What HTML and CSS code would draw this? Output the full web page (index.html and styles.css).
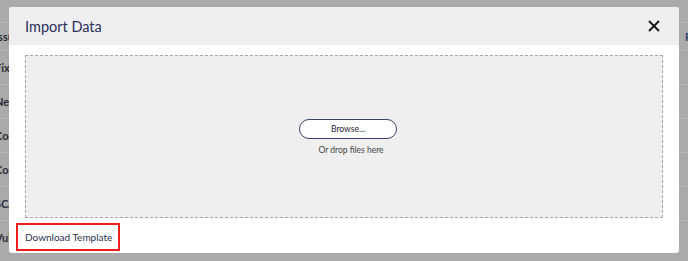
FILE: index.html
```html
<!DOCTYPE html>
<html lang="en">
<head>
	<meta charset="UTF-8">
	<meta name="viewport" content="width=device-width, initial-scale=1.0">
	<title>Import Data</title>
	<link rel="stylesheet" href="styles.css">
</head>
<body>
	<div id="page">
		<div class="page-row page-first"><span class="cell-l">Issue</span><span class="cell-r">R</span></div>
		<div class="page-row"><span class="cell-l">Fixed</span><span class="cell-r"></span></div>
		<div class="page-row"><span class="cell-l">Needs</span><span class="cell-r"></span></div>
		<div class="page-row"><span class="cell-l">Con</span><span class="cell-r"></span></div>
		<div class="page-row"><span class="cell-l">Con</span><span class="cell-r"></span></div>
		<div class="page-row"><span class="cell-l">SCA</span><span class="cell-r"></span></div>
		<div class="page-row"><span class="cell-l">Vuln</span><span class="cell-r"></span></div>
	</div>

	<div id="im-modal">
		<div id="im-head">
			<h2 id="im-title">Import Data</h2>
			<div id="im-close" title="Close">
				<svg width="12" height="12" viewBox="0 0 12 12"><path d="M1 1 L11 11 M11 1 L1 11" stroke="#111" stroke-width="1.8" fill="none"/></svg>
			</div>
		</div>
		<div id="im-body">
			<div id="im-drop">
				<button class="im-browse">Browse...</button>
				<div class="im-hint">Or drop files here</div>
			</div>
		</div>
		<div id="im-foot">
			<a class="im-template">Download Template</a>
		</div>
	</div>
</body>
</html>
```

FILE: styles.css
```css
html, body {
  margin: 0;
  padding: 0;
}

body {
  width: 688px;
  height: 261px;
  overflow: hidden;
  background: #aaaaaa;
  font-family: Lato, "Open Sans", sans-serif;
  position: relative;
}

#page {
  padding-top: 22px;
}

.page-row {
  display: flex;
  justify-content: space-between;
  align-items: center;
  height: 33px;
  border-top: 1px solid #b9b9b9;
  font-size: 11px;
  font-weight: bold;
  color: #2a2c38;
}
.page-first {
  height: 27px;
}

.cell-l {
  margin-left: -5px;
}
.cell-r {
  color: #2d3b6a;
  margin-right: -4px;
}

#im-modal {
  position: absolute;
  left: 9px;
  top: 7px;
  width: 670px;
  height: 246px;
  background: #fff;
  border-radius: 3px;
  overflow: hidden;
  display: flex;
  flex-direction: column;
}

#im-head {
  flex-shrink: 0;
  height: 38px;
  background: #efefef;
  display: flex;
  align-items: center;
  justify-content: space-between;
  padding: 0 19px 0 16px;
}

#im-title {
  margin: 0;
  font-size: 14.5px;
  font-weight: normal;
  color: #2b2e5a;
}

#im-close {
  width: 12px;
  height: 12px;
  cursor: pointer;
}
#im-close svg {
  display: block;
}

#im-body {
  flex-shrink: 0;
  padding: 10px 16px 0;
}

#im-drop {
  box-sizing: border-box;
  height: 163px;
  padding-left: 8px;
  background: #efefef;
  border: 1px dashed #a6a6a6;
  display: flex;
  flex-direction: column;
  align-items: center;
  justify-content: center;
}

.im-browse {
  width: 98px;
  height: 20px;
  border: 1.5px solid #3b4166;
  border-radius: 10px;
  background: #fff;
  font-family: inherit;
  font-size: 8.5px;
  color: #1e2238;
  padding: 0;
  cursor: pointer;
}

.im-hint {
  margin-top: 6px;
  padding-left: 6px;
  font-size: 8.5px;
  color: #444;
}

#im-foot {
  flex-shrink: 0;
  padding: 5px 7px 0;
}

.im-template {
  display: inline-block;
  box-sizing: border-box;
  height: 28px;
  width: 104px;
  line-height: 24px;
  padding-left: 7px;
  border: 2px solid #ee1c1c;
  font-size: 10px;
  white-space: nowrap;
  color: #2b2f52;
  cursor: pointer;
}
```
